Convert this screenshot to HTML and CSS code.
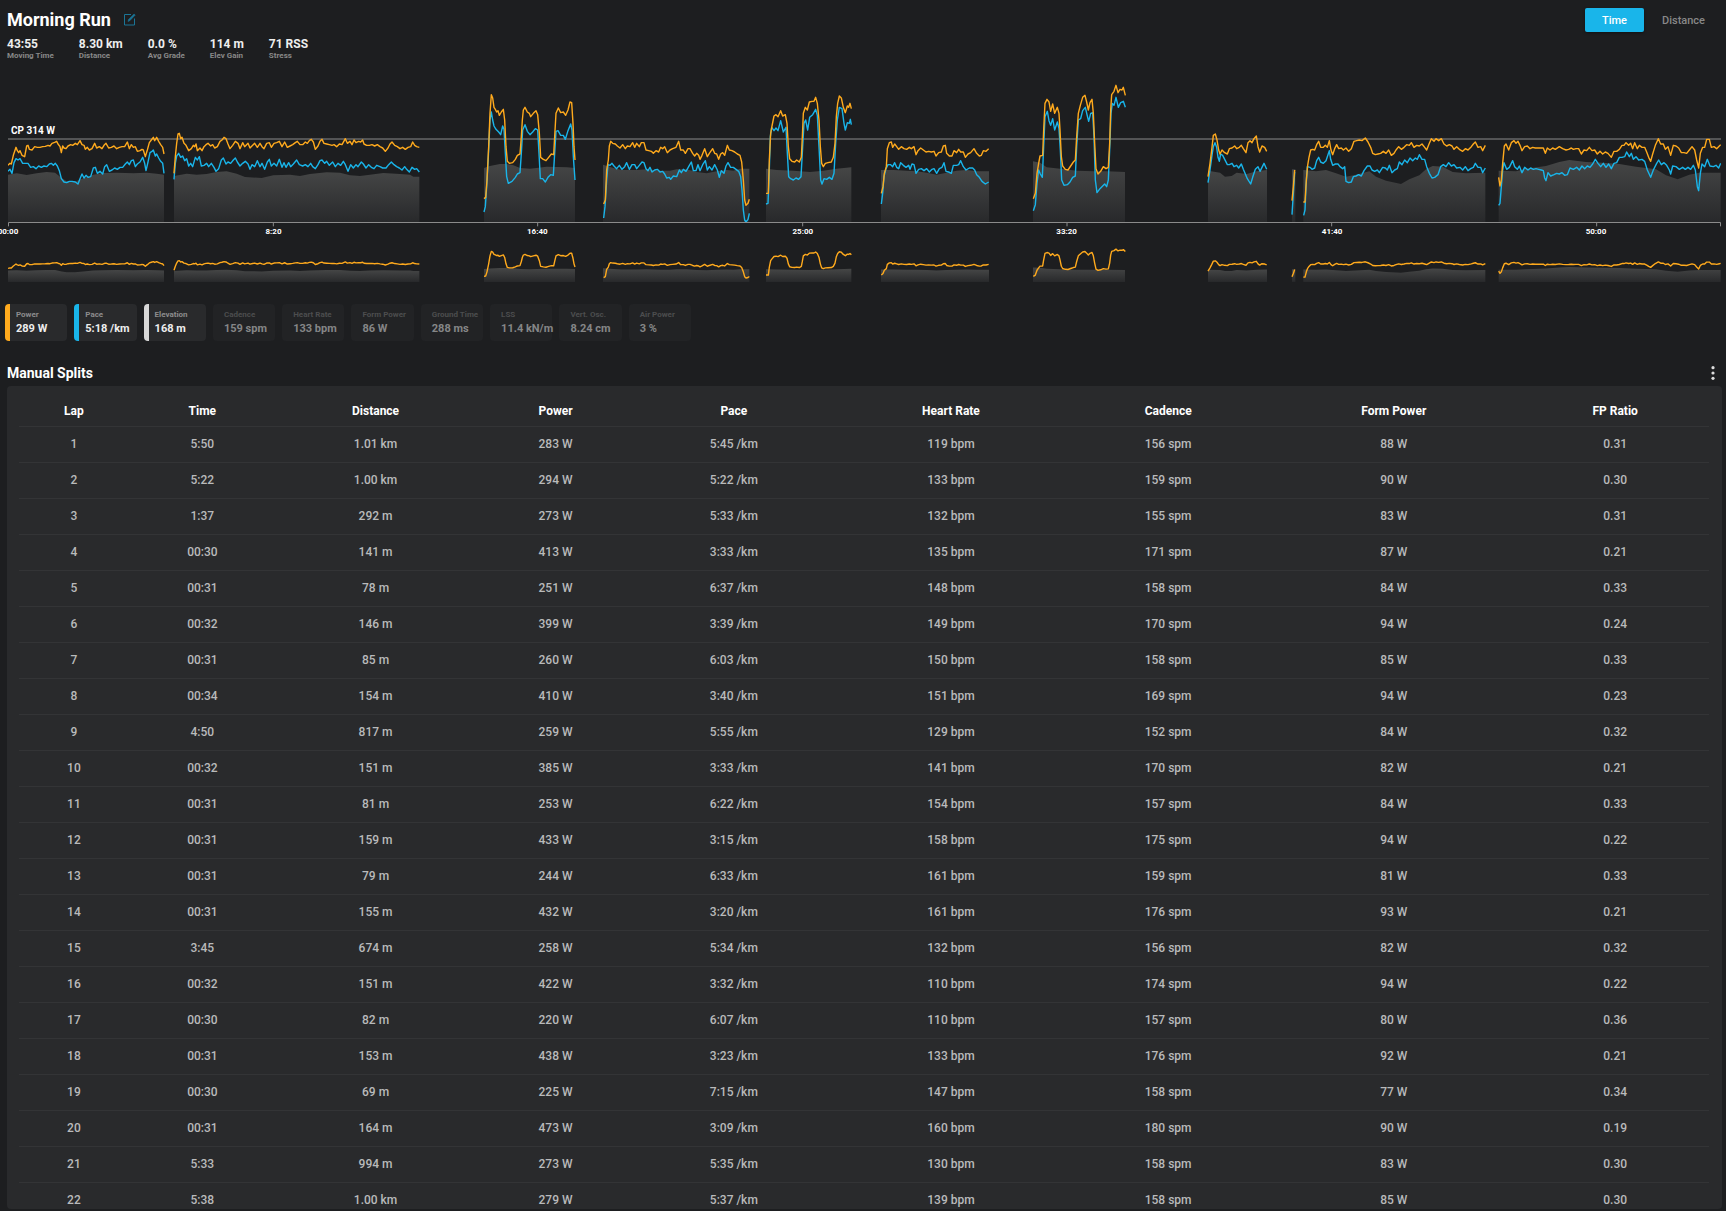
FILE: index.html
```html
<!DOCTYPE html>
<html lang="en">
<head>
    <meta charset="utf-8">
    <title>Morning Run</title>
    <link rel="stylesheet" href="styles.css">
</head>
<body>
    <header class="header">
        <div>
            <div class="title-row">
                <h1>Morning Run</h1>
                <button class="icon-button edit" type="button" aria-label="Edit">
                    <svg width="13" height="13" viewBox="0 0 13 13" fill="none" stroke="#1b7596">
                        <path d="M8 1.5H1.5V12H11.5V5.5"/>
                        <path d="M5 8.5L5.5 6.5L11 1L12.3 2L6.8 7.7Z" fill="#1b7596" stroke-width=".5"/>
                    </svg>
                </button>
            </div>
            <dl class="stats">
                <div><dd>43:55</dd><dt>Moving Time</dt></div>
                <div><dd>8.30 km</dd><dt>Distance</dt></div>
                <div><dd>0.0 %</dd><dt>Avg Grade</dt></div>
                <div><dd>114 m</dd><dt>Elev Gain</dt></div>
                <div><dd>71 RSS</dd><dt>Stress</dt></div>
            </dl>
        </div>
        <div class="toggle">
            <button class="active" type="button">Time</button>
            <button type="button">Distance</button>
        </div>
    </header>

    <!-- Power, pace and elevation over time, with the overview strip under it -->
    <svg class="chart">
        <defs>
            <linearGradient id="ground" x1="0" y1="0" x2="0" y2="1">
                <stop offset="0" stop-color="#454646"/>
                <stop offset="1" stop-color="#28292b"/>
            </linearGradient>
        </defs>
        <svg width="100%" height="100%" viewBox="24 210 5139 672" preserveAspectRatio="none">
            <g id="elevation" class="elevation">
                <g>
                    <path d="M24,666 24,524 50,520 80,525 110,520 140,516 165,518 185,534 200,544 225,545 250,535 280,524 310,519 350,518 400,520 440,518 470,521 492,524 492,666Z"/>
                    <path d="M522,666 522,528 560,521 590,524 620,522 650,516 680,514 710,521 735,531 785,534 820,526 870,524 900,528 930,522 980,517 1020,518 1050,526 1080,528 1110,524 1150,519 1200,522 1230,524 1240,530 1258,530 1258,666Z"/>
                </g>
                <g transform="translate(1320 210)">
                    <path d="M132,456 132,294 150,288 180,282 200,282 220,286 240,294 270,296 290,294 320,290 380,292 405,294 405,456Z"/>
                    <path d="M489,456 489,284 520,294 545,300 590,300 620,298 660,302 690,302 710,298 740,298 770,306 800,310 830,304 860,300 880,302 900,296 928,296 928,456Z"/>
                    <path d="M978,456 978,296 1010,300 1060,302 1110,306 1150,302 1190,296 1234,292 1234,456Z"/>
                </g>
                <g transform="translate(2580 210)">
                    <path d="M63,456 63,300 100,300 140,302 170,304 200,308 230,314 260,308 290,302 320,300 350,304 387,304 387,456Z"/>
                    <path d="M519,456 519,274 540,278 560,292 600,296 650,302 700,304 740,304 795,306 795,456Z"/>
                    <path d="M1044,456 1044,302 1080,308 1095,320 1115,318 1130,308 1160,312 1190,304 1221,300 1221,456Z"/>
                </g>
                <g transform="translate(3858 210)">
                    <path d="M18,456 18,298 28,298 28,456Z"/>
                    <path d="M52,456 52,300 90,304 120,300 150,310 180,320 210,314 250,304 270,320 300,332 345,342 370,328 400,316 420,298 440,288 470,290 500,306 540,310 598,308 598,456Z"/>
                    <path d="M638,456 638,302 690,304 720,296 780,288 820,276 850,270 900,276 950,278 1000,282 1050,290 1110,298 1140,316 1175,328 1210,314 1240,308 1304,308 1304,456Z"/>
                </g>
            </g>
            <line class="threshold" x1="24" y1="417" x2="5163" y2="417"/>
            <g class="pace">
                <g>
                    <polyline points="24,514 30,508 36,520 42,488 48,476 54,480 60,476 68,490 76,490 84,490 92,502 100,500 108,506 116,498 124,502 132,498 140,500 148,492 154,490 160,496 166,490 172,498 178,512 184,536 192,546 200,548 208,544 216,544 226,546 234,552 240,536 246,522 252,534 258,526 264,532 272,530 280,504 286,502 292,520 300,514 308,522 314,500 320,494 328,514 336,510 344,504 352,508 360,502 368,502 376,492 382,486 388,494 394,482 400,480 406,500 412,492 420,486 428,472 434,490 438,512 444,486 450,458 456,454 460,450 466,468 470,462 476,474 482,484 488,490 492,520"/>
                    <polyline points="522,538 526,490 530,468 536,460 542,472 548,468 554,482 560,476 566,498 572,490 578,500 586,472 592,480 598,470 604,498 612,496 620,490 626,500 634,490 642,502 648,514 656,506 664,480 670,474 678,492 684,486 692,490 700,480 706,474 712,486 720,498 728,490 736,484 744,492 750,508 756,494 764,500 772,482 780,500 786,490 794,508 802,486 808,478 814,498 822,490 830,498 838,478 846,502 852,488 858,502 866,488 872,500 880,492 890,480 898,494 908,498 916,494 924,500 932,490 938,500 946,506 954,494 960,482 966,480 974,490 980,484 988,496 998,486 1006,500 1014,490 1022,496 1030,484 1036,494 1044,514 1052,494 1060,504 1068,494 1074,500 1084,486 1090,492 1098,504 1106,494 1114,502 1122,506 1130,496 1140,500 1148,504 1158,504 1166,494 1174,486 1182,494 1190,500 1198,504 1206,510 1214,500 1220,508 1228,516 1236,502 1244,508 1250,506 1258,516"/>
                </g>
                <g transform="translate(1320 210)">
                    <polyline points="132,426 136,410 140,350 145,260 150,150 154,126 158,150 162,168 168,178 176,186 182,194 188,168 192,178 196,250 200,320 205,340 216,334 226,322 232,312 240,308 244,250 248,180 255,164 262,184 270,194 278,186 286,176 293,180 297,250 301,326 308,326 316,336 324,322 332,314 340,316 344,250 348,184 354,182 362,196 370,196 376,208 384,182 392,162 396,180 400,260 405,330"/>
                    <polyline points="491,444 495,410 500,330 504,284 510,286 516,280 522,288 530,296 538,286 546,298 554,290 560,278 568,298 576,284 584,284 590,296 598,286 606,276 612,278 618,296 624,302 630,292 636,306 644,300 652,298 660,306 668,304 674,312 680,324 688,322 692,328 700,318 710,320 718,300 724,308 730,298 738,304 746,290 754,276 760,302 768,302 774,284 780,302 788,284 796,272 802,300 808,290 816,300 824,284 832,300 838,322 844,302 852,310 858,288 864,278 872,292 880,292 888,298 896,304 902,320 906,360 910,420 914,450 918,456 924,448 928,430"/>
                    <polyline points="978,402 984,400 987,330 991,200 995,172 1002,182 1008,174 1014,182 1022,152 1030,186 1038,172 1042,250 1046,320 1052,326 1060,330 1068,324 1076,328 1083,320 1088,230 1092,160 1097,150 1103,180 1109,142 1118,134 1127,118 1132,136 1137,230 1142,330 1146,342 1152,326 1160,328 1168,322 1176,328 1182,310 1187,220 1192,150 1198,112 1206,116 1212,160 1216,180 1222,158 1228,160 1231,148 1234,164"/>
                </g>
                <g transform="translate(2580 210)">
                    <polyline points="64,402 68,370 72,320 78,296 84,284 92,284 98,290 104,278 110,292 116,296 122,278 130,286 138,292 146,286 150,298 156,282 162,284 168,310 176,298 184,296 192,302 200,296 208,306 216,298 222,296 230,310 238,296 246,292 252,278 258,304 266,306 274,310 280,286 290,286 296,284 302,272 310,290 318,300 328,294 338,294 344,300 350,314 358,322 366,334 376,342 386,336"/>
                    <polyline points="520,422 526,404 531,340 536,300 541,312 547,322 551,230 555,140 562,124 567,152 572,166 578,146 584,180 592,156 597,176 601,240 605,330 612,346 622,344 630,336 638,322 646,318 650,230 655,150 662,146 668,122 676,112 681,134 686,154 692,130 698,128 702,200 706,330 711,368 720,356 728,348 734,342 740,350 745,330 749,240 753,130 757,100 762,106 768,82 775,112 782,98 790,94 796,112"/>
                    <polyline points="1044,338 1050,300 1056,256 1060,230 1065,218 1070,232 1074,262 1078,274 1082,252 1088,256 1096,272 1102,284 1108,284 1116,280 1122,290 1130,286 1136,294 1144,282 1150,298 1156,312 1162,326 1172,342 1178,322 1186,298 1194,290 1200,304 1206,292 1212,280 1220,298"/>
                </g>
                <g transform="translate(3858 210)">
                    <polyline points="18,434 22,370 26,306"/>
                    <polyline points="53,436 57,420 60,350 64,290 72,292 78,298 86,294 92,272 98,262 104,276 112,280 120,272 130,242 134,268 140,286 148,282 156,282 162,290 170,296 176,290 180,334 188,338 196,336 202,320 210,318 218,314 226,318 234,302 244,288 252,288 258,300 266,304 274,300 280,308 290,292 298,294 304,300 310,286 318,308 326,300 334,296 340,276 348,284 356,270 364,278 372,264 380,272 388,264 394,268 400,254 408,268 416,268 422,290 430,310 438,324 446,322 456,314 464,290 472,284 480,290 488,278 496,288 504,284 512,294 522,292 530,300 538,290 546,302 554,296 562,292 568,280 576,292 584,292 590,308 598,294"/>
                    <polyline points="638,406 642,400 646,350 650,300 654,278 662,298 670,292 680,272 686,290 694,298 700,288 708,308 716,292 726,300 734,294 742,298 750,296 758,298 766,300 772,302 776,324 780,332 786,308 794,318 804,314 812,310 820,312 828,308 836,316 844,314 852,294 862,298 872,292 880,300 888,288 896,296 904,288 912,292 920,282 928,268 936,280 944,290 952,280 960,292 968,282 976,296 984,280 992,278 1000,262 1008,262 1016,260 1022,246 1030,260 1036,250 1042,268 1050,260 1058,270 1068,268 1076,274 1084,300 1094,322 1102,300 1112,280 1118,270 1126,284 1134,278 1142,286 1150,300 1154,312 1160,288 1170,290 1180,298 1190,292 1198,298 1206,292 1214,298 1222,286 1228,300 1234,350 1238,362 1243,310 1248,282 1256,290 1264,268 1272,288 1282,290 1290,286 1298,294 1304,280"/>
                </g>
            </g>
            <g id="power" class="power">
                <g>
                    <polyline points="24,496 30,490 34,492 40,466 48,442 52,452 56,458 60,452 66,466 74,470 80,438 84,436 88,448 96,450 104,440 112,442 120,442 128,440 136,439 144,436 150,438 156,430 164,427 170,424 174,432 180,440 184,458 188,438 192,444 198,446 204,438 212,434 218,436 226,430 232,434 240,422 246,434 252,436 256,448 262,442 268,450 276,446 284,430 290,444 298,440 306,446 312,436 318,430 326,444 334,442 342,438 350,446 358,442 366,440 374,440 382,426 388,446 394,434 400,442 406,440 412,454 420,452 426,448 430,450 436,470 442,450 448,428 454,420 460,412 464,422 470,412 476,424 482,434 488,442 492,462"/>
                    <polyline points="522,520 526,470 530,430 534,402 538,400 542,416 546,412 552,430 558,436 566,452 574,446 580,436 584,440 588,432 592,452 600,444 606,452 612,440 618,434 624,430 632,438 638,434 644,444 652,440 660,424 666,420 672,412 678,416 684,432 690,446 698,436 706,424 714,430 720,446 728,428 734,440 744,430 750,444 758,436 764,430 772,442 780,430 786,440 792,446 800,430 808,428 814,442 822,430 830,428 838,424 846,440 854,426 862,442 870,438 878,434 886,428 892,424 900,434 908,434 916,426 922,430 928,422 934,418 940,426 946,448 954,438 960,424 966,418 972,430 980,432 988,434 996,436 1002,434 1010,440 1018,432 1026,434 1036,416 1042,430 1050,424 1056,434 1062,420 1068,428 1076,424 1082,426 1088,420 1092,432 1100,436 1108,436 1116,434 1124,438 1132,434 1140,440 1148,444 1156,454 1164,444 1170,432 1176,426 1184,436 1192,440 1200,446 1208,442 1216,448 1224,442 1232,440 1238,426 1244,436 1250,440 1258,442"/>
                </g>
                <g transform="translate(1320 210)">
                    <polyline points="132,386 137,382 141,330 146,230 150,130 154,74 158,84 162,112 166,118 170,126 174,122 178,136 184,126 190,118 194,150 198,230 202,274 208,280 218,278 226,268 232,256 240,252 244,200 247,150 250,120 255,112 262,126 268,130 272,140 280,130 288,122 293,134 298,190 302,262 310,268 318,272 326,262 334,252 341,254 344,200 348,130 355,114 362,128 370,126 377,136 384,120 390,96 395,98 399,160 402,230 405,270"/>
                    <polyline points="491,402 496,390 500,300 505,270 508,228 512,214 518,220 526,222 532,228 540,234 548,224 556,236 562,228 570,230 578,218 584,232 590,220 598,230 604,218 612,218 618,240 626,242 634,244 640,250 648,242 656,246 662,232 668,236 674,230 682,248 690,240 698,236 708,232 716,214 722,240 730,240 736,250 744,236 750,236 758,250 764,258 770,250 776,256 780,268 786,256 794,236 802,260 808,250 818,236 824,250 830,252 836,268 842,252 848,248 854,256 862,226 868,240 876,242 884,246 892,252 900,256 905,276 910,330 914,390 918,406 924,400 928,388"/>
                    <polyline points="978,370 985,370 988,270 992,190 996,168 1002,138 1008,134 1014,140 1022,122 1028,138 1036,134 1041,160 1045,230 1049,266 1056,274 1064,276 1070,270 1078,276 1084,262 1087,200 1090,130 1096,112 1102,120 1108,96 1116,94 1122,94 1127,82 1132,100 1137,150 1141,230 1145,280 1150,290 1156,280 1164,278 1174,276 1180,262 1185,220 1189,140 1193,100 1198,78 1204,84 1210,112 1216,128 1222,108 1226,112 1230,100 1234,116"/>
                </g>
                <g transform="translate(2580 210)">
                    <polyline points="64,370 69,350 73,310 79,290 82,236 88,218 94,216 98,232 104,222 110,230 116,238 124,230 132,236 140,238 148,232 154,236 162,230 168,254 174,242 182,234 190,240 198,246 206,244 214,246 222,244 228,258 236,248 244,246 250,228 256,226 260,250 268,258 276,258 282,242 290,248 296,238 302,246 310,246 316,262 324,252 332,248 342,236 350,250 358,258 364,256 370,242 378,244 386,236"/>
                    <polyline points="520,386 526,370 531,310 536,280 540,258 548,256 551,180 555,100 561,88 567,96 572,124 578,102 584,130 592,112 597,130 600,180 604,260 608,288 616,298 624,300 632,288 640,276 646,270 650,200 655,130 661,106 668,82 675,76 680,96 685,120 690,98 696,88 700,130 704,220 708,296 714,312 722,304 730,290 738,296 745,292 749,220 752,120 755,74 762,64 768,46 774,68 780,58 786,60 790,52 796,76"/>
                    <polyline points="1044,320 1050,280 1055,240 1060,196 1066,192 1071,210 1076,240 1080,252 1086,240 1094,248 1102,252 1108,236 1116,234 1124,228 1130,236 1138,232 1144,226 1150,236 1158,248 1164,218 1170,212 1176,218 1182,206 1189,198 1194,230 1199,246 1206,228 1214,232 1220,244"/>
                </g>
                <g transform="translate(3858 210)">
                    <polyline points="18,392 22,350 26,300"/>
                    <polyline points="52,396 57,396 61,330 65,286 69,262 74,240 80,238 86,240 92,224 98,214 104,232 112,232 118,226 124,232 130,212 135,240 140,254 146,236 152,224 158,236 166,234 172,240 180,234 188,244 196,236 204,214 212,212 220,210 228,212 238,204 246,216 254,232 260,250 268,254 276,252 284,250 292,244 300,250 308,240 316,256 324,250 330,240 338,230 346,238 354,232 362,224 370,226 376,218 384,232 392,226 400,228 408,222 416,232 422,240 430,220 436,206 444,214 450,206 458,212 466,206 474,222 482,228 490,224 498,228 504,238 512,230 520,238 530,244 538,236 546,240 556,230 562,222 568,216 576,232 584,230 590,242 598,226"/>
                    <polyline points="638,322 642,348 646,330 650,280 655,228 660,222 668,240 676,218 684,212 690,220 696,214 702,226 708,242 716,230 724,228 732,236 740,232 748,234 756,234 764,234 772,234 778,250 784,234 792,240 800,234 808,238 820,230 830,236 840,240 848,238 856,234 862,238 870,236 878,236 886,252 894,240 902,242 910,232 918,242 926,240 934,252 942,244 950,252 958,246 966,250 976,262 984,244 992,244 1000,238 1008,226 1014,226 1020,218 1028,226 1034,220 1040,236 1046,218 1054,236 1060,226 1068,232 1076,232 1082,246 1088,262 1094,274 1100,252 1108,226 1117,206 1124,222 1132,222 1138,238 1146,230 1154,256 1162,226 1170,228 1178,234 1186,248 1194,248 1202,250 1210,240 1218,230 1226,240 1232,270 1238,294 1243,250 1250,232 1256,232 1262,208 1270,208 1276,232 1284,230 1292,236 1300,228 1304,224"/>
                </g>
            </g>
            <!-- overview strip -->
            <g transform="translate(0 686) scale(1 .24)">
                <use href="#elevation"/>
                <use href="#power"/>
            </g>
            <path class="axis" d="M25.5,679V667.5H5161.5V679M820,667V679M1613,667V679M2408,667V679M3201,667V679M3995,667V679M4790,667V679"/>
        </svg>
        <text class="threshold-label" x="3" y="64">CP 314 W</text>
        <g class="ticks">
            <text x="0" y="164">00:00</text>
            <text x="15.5%" y="164">8:20</text>
            <text x="30.9%" y="164">16:40</text>
            <text x="46.4%" y="164">25:00</text>
            <text x="61.8%" y="164">33:20</text>
            <text x="77.3%" y="164">41:40</text>
            <text x="92.7%" y="164">50:00</text>
        </g>
    </svg>

    <div class="metrics">
        <button class="metric on orange" type="button"><span>Power</span><b>289 W</b></button>
        <button class="metric on blue" type="button"><span>Pace</span><b>5:18 /km</b></button>
        <button class="metric on grey" type="button"><span>Elevation</span><b>168 m</b></button>
        <button class="metric" type="button"><span>Cadence</span><b>159 spm</b></button>
        <button class="metric" type="button"><span>Heart Rate</span><b>133 bpm</b></button>
        <button class="metric" type="button"><span>Form Power</span><b>86 W</b></button>
        <button class="metric" type="button"><span>Ground Time</span><b>288 ms</b></button>
        <button class="metric" type="button"><span>LSS</span><b>11.4 kN/m</b></button>
        <button class="metric" type="button"><span>Vert. Osc.</span><b>8.24 cm</b></button>
        <button class="metric" type="button"><span>Air Power</span><b>3 %</b></button>
    </div>

    <div class="splits-header">
        <h2>Manual Splits</h2>
        <button class="icon-button" type="button" aria-label="More">
            <svg width="4" height="14" viewBox="0 0 4 14" fill="#ddd">
                <circle cx="2" cy="1.7" r="1.6"/>
                <circle cx="2" cy="7" r="1.6"/>
                <circle cx="2" cy="12.3" r="1.6"/>
            </svg>
        </button>
    </div>

    <div class="splits">
        <table>
            <colgroup>
                <col class="lap"><col class="time"><col class="distance"><col class="watts"><col class="speed">
                <col class="heart"><col class="cadence"><col class="form"><col class="ratio">
            </colgroup>
            <thead>
                <tr><th>Lap</th><th>Time</th><th>Distance</th><th>Power</th><th>Pace</th><th>Heart Rate</th><th>Cadence</th><th>Form Power</th><th>FP Ratio</th></tr>
            </thead>
            <tbody>
                <tr><td>1</td><td>5:50</td><td>1.01 km</td><td>283 W</td><td>5:45 /km</td><td>119 bpm</td><td>156 spm</td><td>88 W</td><td>0.31</td></tr>
                <tr><td>2</td><td>5:22</td><td>1.00 km</td><td>294 W</td><td>5:22 /km</td><td>133 bpm</td><td>159 spm</td><td>90 W</td><td>0.30</td></tr>
                <tr><td>3</td><td>1:37</td><td>292 m</td><td>273 W</td><td>5:33 /km</td><td>132 bpm</td><td>155 spm</td><td>83 W</td><td>0.31</td></tr>
                <tr><td>4</td><td>00:30</td><td>141 m</td><td>413 W</td><td>3:33 /km</td><td>135 bpm</td><td>171 spm</td><td>87 W</td><td>0.21</td></tr>
                <tr><td>5</td><td>00:31</td><td>78 m</td><td>251 W</td><td>6:37 /km</td><td>148 bpm</td><td>158 spm</td><td>84 W</td><td>0.33</td></tr>
                <tr><td>6</td><td>00:32</td><td>146 m</td><td>399 W</td><td>3:39 /km</td><td>149 bpm</td><td>170 spm</td><td>94 W</td><td>0.24</td></tr>
                <tr><td>7</td><td>00:31</td><td>85 m</td><td>260 W</td><td>6:03 /km</td><td>150 bpm</td><td>158 spm</td><td>85 W</td><td>0.33</td></tr>
                <tr><td>8</td><td>00:34</td><td>154 m</td><td>410 W</td><td>3:40 /km</td><td>151 bpm</td><td>169 spm</td><td>94 W</td><td>0.23</td></tr>
                <tr><td>9</td><td>4:50</td><td>817 m</td><td>259 W</td><td>5:55 /km</td><td>129 bpm</td><td>152 spm</td><td>84 W</td><td>0.32</td></tr>
                <tr><td>10</td><td>00:32</td><td>151 m</td><td>385 W</td><td>3:33 /km</td><td>141 bpm</td><td>170 spm</td><td>82 W</td><td>0.21</td></tr>
                <tr><td>11</td><td>00:31</td><td>81 m</td><td>253 W</td><td>6:22 /km</td><td>154 bpm</td><td>157 spm</td><td>84 W</td><td>0.33</td></tr>
                <tr><td>12</td><td>00:31</td><td>159 m</td><td>433 W</td><td>3:15 /km</td><td>158 bpm</td><td>175 spm</td><td>94 W</td><td>0.22</td></tr>
                <tr><td>13</td><td>00:31</td><td>79 m</td><td>244 W</td><td>6:33 /km</td><td>161 bpm</td><td>159 spm</td><td>81 W</td><td>0.33</td></tr>
                <tr><td>14</td><td>00:31</td><td>155 m</td><td>432 W</td><td>3:20 /km</td><td>161 bpm</td><td>176 spm</td><td>93 W</td><td>0.21</td></tr>
                <tr><td>15</td><td>3:45</td><td>674 m</td><td>258 W</td><td>5:34 /km</td><td>132 bpm</td><td>156 spm</td><td>82 W</td><td>0.32</td></tr>
                <tr><td>16</td><td>00:32</td><td>151 m</td><td>422 W</td><td>3:32 /km</td><td>110 bpm</td><td>174 spm</td><td>94 W</td><td>0.22</td></tr>
                <tr><td>17</td><td>00:30</td><td>82 m</td><td>220 W</td><td>6:07 /km</td><td>110 bpm</td><td>157 spm</td><td>80 W</td><td>0.36</td></tr>
                <tr><td>18</td><td>00:31</td><td>153 m</td><td>438 W</td><td>3:23 /km</td><td>133 bpm</td><td>176 spm</td><td>92 W</td><td>0.21</td></tr>
                <tr><td>19</td><td>00:30</td><td>69 m</td><td>225 W</td><td>7:15 /km</td><td>147 bpm</td><td>158 spm</td><td>77 W</td><td>0.34</td></tr>
                <tr><td>20</td><td>00:31</td><td>164 m</td><td>473 W</td><td>3:09 /km</td><td>160 bpm</td><td>180 spm</td><td>90 W</td><td>0.19</td></tr>
                <tr><td>21</td><td>5:33</td><td>994 m</td><td>273 W</td><td>5:35 /km</td><td>130 bpm</td><td>158 spm</td><td>83 W</td><td>0.30</td></tr>
                <tr><td>22</td><td>5:38</td><td>1.00 km</td><td>279 W</td><td>5:37 /km</td><td>139 bpm</td><td>158 spm</td><td>85 W</td><td>0.30</td></tr>
            </tbody>
        </table>
    </div>
</body>
</html>
```
FILE: styles.css
```css
* {
    box-sizing: border-box;
}

body {
    display: flex;
    flex-direction: column;
    height: 100vh;
    margin: 0;
    padding-bottom: 2px;
    overflow: hidden;
    background: #1d1e20;
    color: #fff;
    font-family: Roboto, "Liberation Sans", sans-serif;
}

button {
    margin: 0;
    padding: 0;
    border: 0;
    background: none;
    color: inherit;
    font-family: inherit;
    cursor: pointer;
}

.icon-button {
    display: flex;
}

/* header */
.header {
    display: flex;
    justify-content: space-between;
    align-items: flex-start;
    flex: none;
    height: 70px;
    padding: 8px 13px 0 7px;
}

.title-row {
    display: flex;
    align-items: center;
    gap: 12px;
    height: 23px;
}

h1 {
    margin: 0;
    font-size: 18px;
    font-weight: 700;
}

.stats {
    display: flex;
    gap: 25px;
    margin: 6px 0 0;
}

.stats dd {
    margin: 0;
    color: #eee;
    font-size: 12px;
    font-weight: 700;
    line-height: 14px;
}

.stats dt {
    color: #888;
    font-size: 8px;
    font-weight: 700;
    line-height: 9px;
}

.toggle {
    display: flex;
}

.toggle button {
    width: 59px;
    height: 24px;
    margin-right: 10px;
    border-radius: 2px;
    color: #888;
    font-size: 11px;
    font-weight: 500;
}

.toggle button:last-child {
    margin-right: 0;
}

.toggle .active {
    background: #19b5ea;
    color: #fff;
    box-shadow: 0 1px 3px rgba(0, 0, 0, 0.4);
}

/* chart */
.chart {
    display: block;
    flex: none;
    width: calc(100% - 13px);
    height: 224px;
    margin: 0 5px 0 8px;
    overflow: visible;
}

.elevation path {
    fill: url(#ground);
}

.power polyline,
.pace polyline {
    fill: none;
    stroke-width: 1.4px;
    stroke-linejoin: round;
    vector-effect: non-scaling-stroke;
}

.power polyline {
    stroke: #ffaa1d;
}

.pace polyline {
    stroke: #19b5ea;
}

.threshold,
.axis {
    fill: none;
    stroke: #8b8b8b;
    stroke-width: 1px;
    vector-effect: non-scaling-stroke;
}

.threshold-label {
    fill: #fff;
    font-size: 10px;
    font-weight: 700;
}

.ticks text {
    fill: #fff;
    font-size: 8px;
    font-weight: 700;
    text-anchor: middle;
}

/* metric tiles */
.metrics {
    display: flex;
    flex: none;
    gap: 7px;
    margin-top: 10px;
    padding-left: 5px;
}

.metric {
    width: 3.62%;
    min-width: 60px;
    height: 37px;
    padding-left: 6px;
    border-left: 5px solid transparent;
    border-radius: 4px;
    background: #222325;
    text-align: left;
    white-space: nowrap;
}

.metric span,
.metric b {
    display: block;
}

.metric span {
    color: #4c4d4e;
    font-size: 8px;
    font-weight: 700;
    line-height: 12px;
}

.metric b {
    color: #858687;
    font-size: 11px;
    font-weight: 700;
    line-height: 15px;
}

.metric.on {
    background: #292a2c;
}

.metric.on span {
    color: #8c8c8d;
}

.metric.on b {
    color: #eee;
}

.metric.orange {
    border-left-color: #ffaa1d;
}

.metric.blue {
    border-left-color: #19b5ea;
}

.metric.grey {
    border-left-color: #d8d8d8;
}

/* splits */
.splits-header {
    display: flex;
    flex: none;
    justify-content: space-between;
    align-items: center;
    height: 27px;
    margin-top: 18px;
    padding: 0 11px 0 7px;
}

h2 {
    margin: 0;
    font-size: 14px;
    font-weight: 700;
}

.splits {
    flex: 1;
    min-height: 0;
    margin: 0 4px 0 7px;
    padding: 10px 13px 0 12px;
    border-radius: 4px;
    background: #292a2c;
    overflow: hidden;
}

table {
    width: 100%;
    table-layout: fixed;
    border-collapse: collapse;
    text-align: center;
}

th,
td {
    padding: 0;
    border-bottom: 1px solid #333436;
    font-size: 12px;
}

th {
    height: 30px;
    font-weight: 700;
}

td {
    height: 36px;
    color: #b9babb;
    font-weight: 500;
}

.lap {
    width: 6.5%;
}

.time {
    width: 8.7%;
}

.distance {
    width: 11.8%;
}

.watts {
    width: 9.5%;
}

.speed {
    width: 11.6%;
}

.heart {
    width: 14.1%;
}

.cadence {
    width: 11.6%;
}

.form {
    width: 15.1%;
}

.ratio {
    width: 11.1%;
}
```
